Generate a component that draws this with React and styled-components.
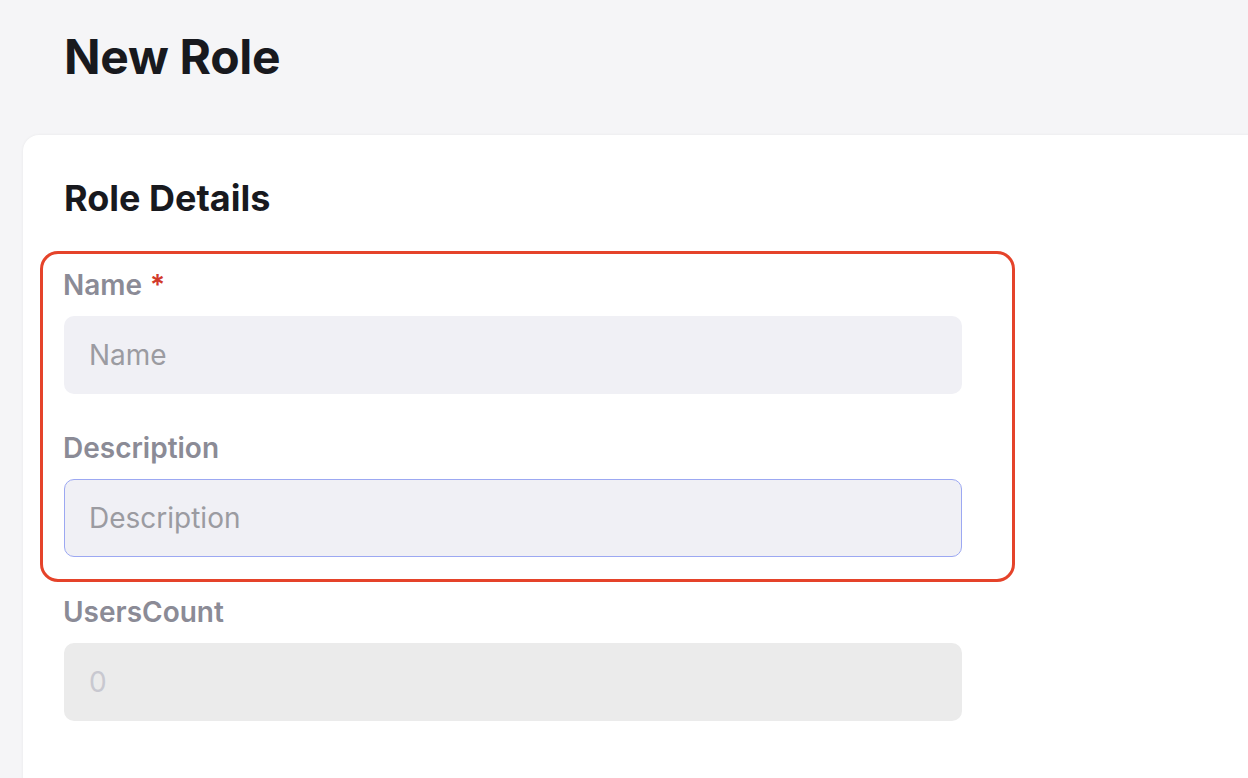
import React from 'react';
import styled, { createGlobalStyle } from 'styled-components';

const GlobalStyle = createGlobalStyle`
  html, body {
    margin: 0;
    padding: 0;
    background: #f5f5f7;
    overflow: hidden;
  }
  body {
    font-family: Inter, "Noto Sans", sans-serif;
  }
`;

const Page = styled.div`
  height: 100vh;
  padding: 28px 0 0 23px;
  box-sizing: border-box;
  overflow: hidden;
`;

const Title = styled.h1`
  margin: 0 0 49px 41px;
  font-size: 48px;
  line-height: 58px;
  font-weight: 700;
  color: #18191e;
  letter-spacing: -0.3px;
`;

const Card = styled.section`
  width: 1300px;
  min-height: 700px;
  background: #ffffff;
  border-radius: 16px;
  box-shadow: 0 0 3px rgba(0, 0, 0, 0.06);
  padding: 41px 41px;
  box-sizing: border-box;
`;

const CardTitle = styled.h2`
  margin: 0 0 48px;
  font-size: 36px;
  line-height: 44px;
  font-weight: 700;
  color: #18191e;
`;

const Fields = styled.div`
  display: flex;
  flex-direction: column;
  gap: 38px;
  width: 898px;
`;

const Highlight = styled.div`
  position: relative;
  display: flex;
  flex-direction: column;
  gap: 37px;

  &::after {
    content: '';
    position: absolute;
    top: -17px;
    left: -24px;
    right: -53px;
    bottom: -25px;
    border: 3px solid #e5432a;
    border-radius: 18px;
    pointer-events: none;
  }
`;

const Field = styled.div`
  display: flex;
  flex-direction: column;
  gap: 14px;
`;

const Label = styled.label`
  font-size: 28px;
  line-height: 34px;
  font-weight: 600;
  color: #8b8b96;
  margin-left: -1px;
`;

const Required = styled.span`
  color: #d2392b;
  margin-left: 8px;
`;

const Input = styled.input`
  box-sizing: border-box;
  width: 100%;
  height: 78px;
  padding: 0 24px;
  border-radius: 10px;
  border: 1px solid ${p => (p.$focused ? '#9ca8f2' : 'transparent')};
  background: ${p => (p.disabled ? '#ebebeb' : '#f0f0f5')};
  font-family: Inter, "Noto Sans", sans-serif;
  font-size: 28px;
  color: ${p => (p.disabled ? '#c8c8d0' : '#18191e')};
  outline: none;

  &::placeholder {
    color: #9b9ba1;
  }
`;

const App = () => (
  <Page>
    <GlobalStyle />
    <Title>New Role</Title>
    <Card>
      <CardTitle>Role Details</CardTitle>
      <Fields>
        <Highlight>
          <Field>
            <Label>
              Name<Required>*</Required>
            </Label>
            <Input placeholder="Name" />
          </Field>
          <Field>
            <Label>Description</Label>
            <Input placeholder="Description" $focused />
          </Field>
        </Highlight>
        <Field>
          <Label>UsersCount</Label>
          <Input value="0" disabled readOnly />
        </Field>
      </Fields>
    </Card>
  </Page>
);

export default App;
